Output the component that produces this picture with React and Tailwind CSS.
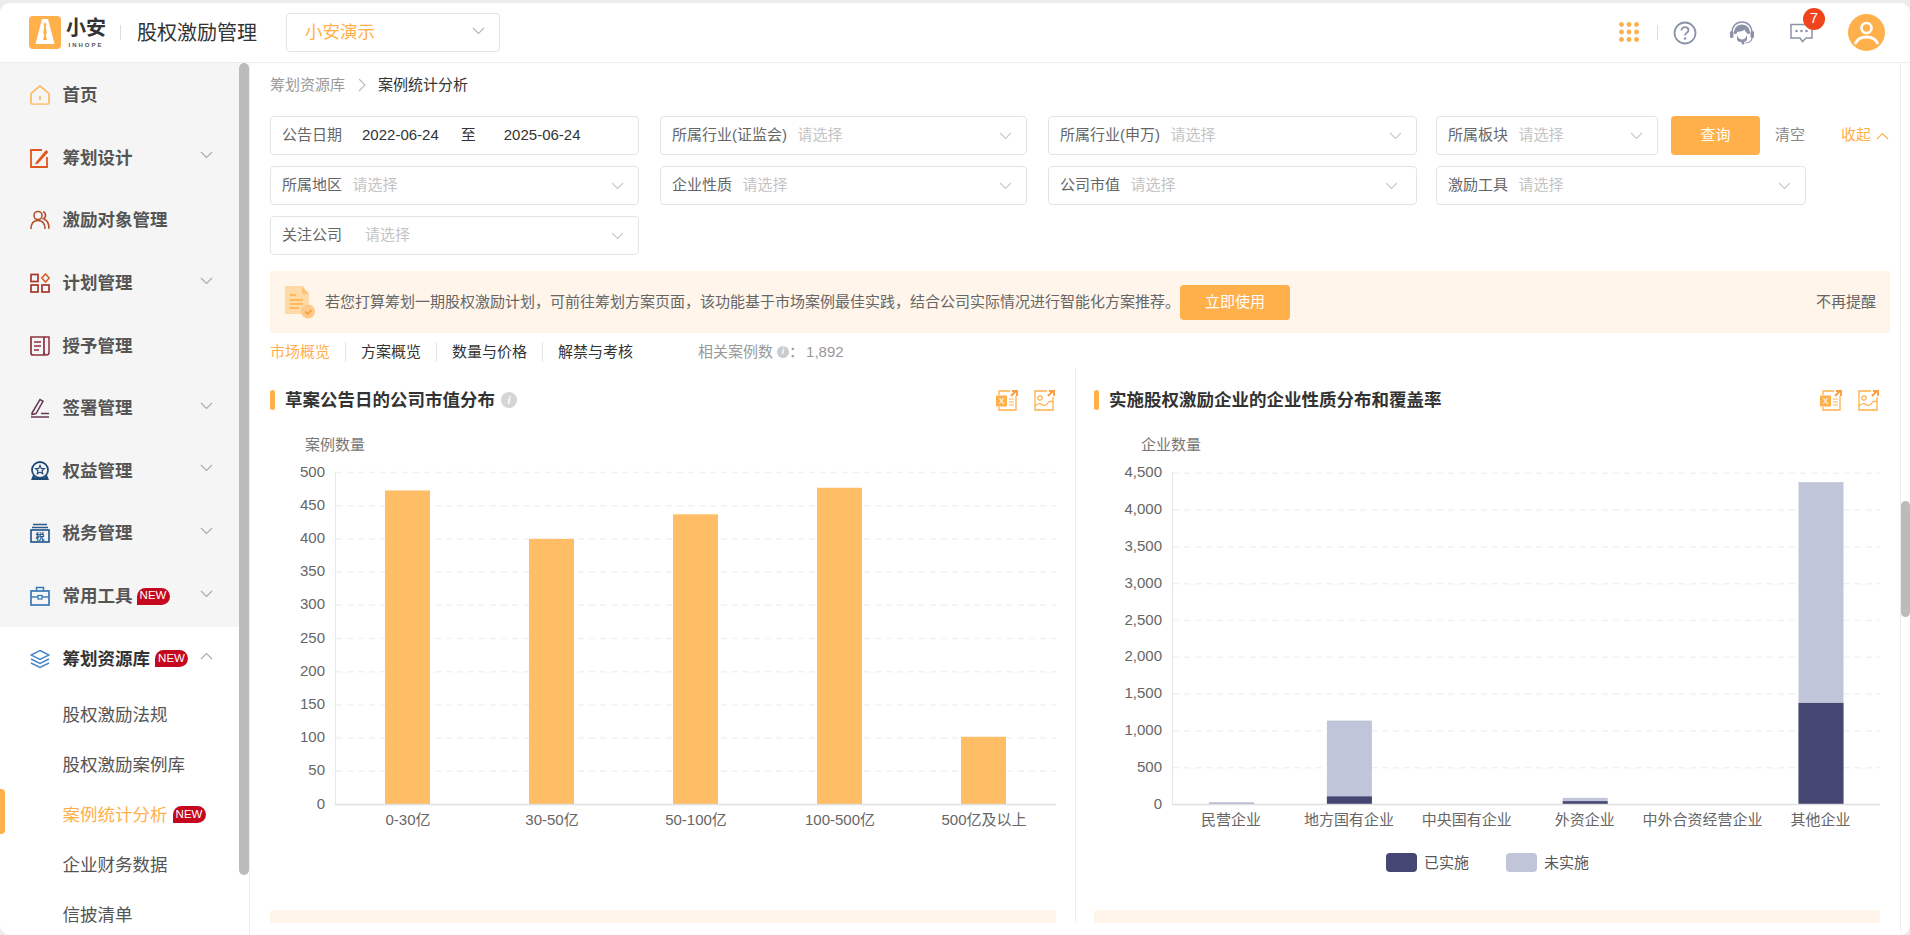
import React from 'react'

function Chevron({ up, color = '#b5b5b5', className = '' }) {
  return (
    <svg width="13" height="8" viewBox="0 0 13 8" fill="none" className={className}>
      <path d={up ? 'M1 7L6.5 1.5L12 7' : 'M1 1L6.5 6.5L12 1'} stroke={color} strokeWidth="1.1" />
    </svg>
  )
}

function Ico({ children }) {
  return <svg width="20" height="20" viewBox="0 0 20 20" fill="none" className="shrink-0">{children}</svg>
}

const icons = {
  home: <Ico><path d="M1 8.5L10 1l9 7.5V18a1 1 0 0 1-1 1H2a1 1 0 0 1-1-1z" stroke="#ffb04a" strokeWidth="1.5" /><path d="M10 11v4" stroke="#ffb04a" strokeWidth="1.5" /><path d="M1 18h18v1.5H1z" fill="#ffd29a" /></Ico>,
  edit: <Ico><path d="M17 9v10H1V2h11" stroke="#e0581e" strokeWidth="1.8" /><path d="M6 14L16 2l2.5 2L8 15.5l-3 1z" fill="#e0581e" /></Ico>,
  people: <Ico><circle cx="8" cy="5.5" r="4" stroke="#b5502e" strokeWidth="1.6" /><path d="M1 19c0-6 2.5-8.5 7-8.5s7 2.5 7 8.5" stroke="#b5502e" strokeWidth="1.6" /><path d="M13 1.8c3 .7 3.5 5.5.5 7 3 1 5.5 3.7 5.5 10" stroke="#b5502e" strokeWidth="1.6" /></Ico>,
  plan: <Ico><rect x="1" y="1.5" width="7" height="7" stroke="#a8352a" strokeWidth="1.7" /><rect x="1" y="12" width="7" height="7" stroke="#a8352a" strokeWidth="1.7" /><rect x="12" y="12" width="7" height="7" stroke="#a8352a" strokeWidth="1.7" /><path d="M15.5 1l3.7 4-3.7 4-3.7-4z" stroke="#d9602a" strokeWidth="1.6" /></Ico>,
  book: <Ico><path d="M1 1h13v18H3a2 2 0 0 1-2-2z" stroke="#8f3040" strokeWidth="1.7" /><path d="M14 1h5v15.5a2.5 2.5 0 0 1-5 0" stroke="#8f3040" strokeWidth="1.5" /><path d="M4 6h7M4 10h7M4 14h5" stroke="#8f3040" strokeWidth="1.3" /></Ico>,
  sign: <Ico><path d="M2 15L10 1.5l3 1.8L6 15.5l-4 1z" stroke="#6a3a55" strokeWidth="1.5" /><path d="M1 19h18M11 15.5h8" stroke="#6a3a55" strokeWidth="1.4" /></Ico>,
  badge: <Ico><circle cx="10" cy="9" r="8" stroke="#1f4a78" strokeWidth="1.8" /><path d="M10 4.5l1.3 2.9 3 .3-2.2 2 .6 3L10 11.2l-2.7 1.5.6-3-2.2-2 3-.3z" stroke="#1f4a78" strokeWidth="1.2" /><path d="M3 14l-2 5h18l-2-5-2.5 2.5h-9z" fill="#1f4a78" /></Ico>,
  tax: <Ico><path d="M3 1.5h14M2 4.5h16" stroke="#2a5a8a" strokeWidth="1.4" /><rect x="1" y="7" width="18" height="12" stroke="#2a5a8a" strokeWidth="1.7" /><text x="10" y="16.5" textAnchor="middle" fontSize="9" fontWeight="700" fill="#2a5a8a">税</text></Ico>,
  tool: <Ico><path d="M6.5 5V1.5h7V5" stroke="#3a78b8" strokeWidth="1.5" /><rect x="1" y="5" width="18" height="14" stroke="#3a78b8" strokeWidth="1.7" /><path d="M1 11h18" stroke="#3a78b8" strokeWidth="1.4" /><rect x="8" y="9.5" width="4" height="3.5" fill="#fff" stroke="#3a78b8" strokeWidth="1.3" /></Ico>,
  layers: <Ico><path d="M10 1.5l9 4.5-9 4.5L1 6z" stroke="#4a86c8" strokeWidth="1.4" /><path d="M1 10l9 4.5 9-4.5M1 14l9 4.5 9-4.5" stroke="#4a86c8" strokeWidth="1.4" /></Ico>,
}

function NewBadge({ className = '' }) {
  return (
    <span className={`inline-flex h-[17px] w-[33px] items-center justify-center rounded-tl-full rounded-r-full bg-[#c4091f] text-[11.5px] font-normal leading-none text-white ${className}`}>NEW</span>
  )
}

function MenuItem({ icon, label, arrow = true, badge, dark, up }) {
  return (
    <div className={`flex h-[62.6px] items-center pl-[30px] pr-[26px] ${dark ? 'bg-white' : ''}`}>
      {icons[icon]}
      <span className={`ml-[12.5px] text-[17.5px] font-bold ${dark ? 'text-[#333]' : 'text-[#555]'}`}>{label}</span>
      {badge && <NewBadge className={dark ? 'ml-[5px]' : 'ml-[4px]'} />}
      {arrow && <Chevron up={up} className="ml-auto -mt-[5px]" color="#aaa" />}
    </div>
  )
}

function Sidebar() {
  return (
    <div className="flex w-[250px] shrink-0 border-r border-[#eee]">
      <div className="w-[239px] shrink-0">
        <div className="bg-[#f5f5f5] pt-px">
          <MenuItem icon="home" label="首页" arrow={false} />
          <MenuItem icon="edit" label="筹划设计" />
          <MenuItem icon="people" label="激励对象管理" arrow={false} />
          <MenuItem icon="plan" label="计划管理" />
          <MenuItem icon="book" label="授予管理" arrow={false} />
          <MenuItem icon="sign" label="签署管理" />
          <MenuItem icon="badge" label="权益管理" />
          <MenuItem icon="tax" label="税务管理" />
          <MenuItem icon="tool" label="常用工具" badge />
        </div>
        <MenuItem icon="layers" label="筹划资源库" badge dark up />
        <div className="flex h-[50px] items-center pl-[62.5px] text-[17.5px] text-[#555]">股权激励法规</div>
        <div className="flex h-[50px] items-center pl-[62.5px] text-[17.5px] text-[#555]">股权激励案例库</div>
        <div className="relative flex h-[50px] items-center pl-[62.5px] text-[17.5px] text-[#ffb04a]">
          <span className="absolute left-0 top-[-1px] h-[45px] w-[5px] rounded-r-[4px] bg-[#ffb04a]" />
          案例统计分析
          <NewBadge className="ml-[5px]" />
        </div>
        <div className="flex h-[50px] items-center pl-[62.5px] text-[17.5px] text-[#555]">企业财务数据</div>
        <div className="flex h-[50px] items-center pl-[62.5px] text-[17.5px] text-[#555]">信披清单</div>
      </div>
      <div className="w-[10px] shrink-0">
        <div className="h-[812px] w-[10px] rounded-[5px] bg-[#bbb]" />
      </div>
    </div>
  )
}

function Logo() {
  return (
    <svg width="32" height="33" viewBox="0 0 32 33" className="shrink-0">
      <rect width="32" height="33" rx="4" fill="#ffb04a" />
      <path d="M13 3h6l6.5 25h-19z" fill="#fff" />
      <path d="M16 6.5c1.5 1 1.5 3 .8 4.5l1 6-1 2 1.2 5h-4l1.2-5-1-2 1-6c-.7-1.5-.7-3.5.8-4.5z" fill="#ffb04a" />
    </svg>
  )
}

function Header() {
  return (
    <div className="flex h-[60px] shrink-0 items-center border-b border-[#eee] bg-white pl-[29px] pr-[25px]">
      <Logo />
      <div className="ml-[5px] flex w-[40px] flex-col items-center">
        <span className="text-[20px] font-bold leading-[24px] text-[#333]">小安</span>
        <span className="mt-[1px] text-[6px] font-bold leading-[8px] tracking-[2px] text-[#555]">INHOPE</span>
      </div>
      <span className="ml-[14px] h-[15px] w-px bg-[#ddd]" />
      <span className="ml-[16px] text-[20px] text-[#333]">股权激励管理</span>
      <div className="ml-[29px] flex h-[39px] w-[214px] items-center justify-between rounded-[4px] border border-[#e4e4e4] pl-[18px] pr-[14px]">
        <span className="text-[17.5px] text-[#ffb04a]">小安演示</span>
        <Chevron className="-mt-[3px]" />
      </div>
      <div className="ml-auto flex items-center">
        <svg width="20" height="21" viewBox="0 0 20 21" fill="#ffb04a">
          {[2.5, 10, 17.5].map(y => [2.5, 10, 17.5].map(x => <circle key={`${x}-${y}`} cx={x} cy={y} r="2.4" />))}
        </svg>
        <span className="ml-[18px] h-[15px] w-px bg-[#ddd]" />
        <svg width="24" height="24" viewBox="0 0 24 24" fill="none" className="ml-[15px]">
          <circle cx="12" cy="12" r="10.5" stroke="#8b93a7" strokeWidth="1.8" />
          <path d="M8.5 9.5c0-2 1.5-3.3 3.5-3.3s3.5 1.3 3.5 3.1c0 2.6-3.5 2.5-3.5 5.2" stroke="#8b93a7" strokeWidth="1.8" />
          <circle cx="12" cy="17.5" r="1.2" fill="#8b93a7" />
        </svg>
        <svg width="26" height="26" viewBox="0 0 26 26" fill="none" className="ml-[32px]">
          <path d="M3 13C3 6.5 7 2 13 2s10 4.5 10 11" stroke="#8b93a7" strokeWidth="1.4" />
          <path d="M5 13c0-5 3.5-8.5 8-8.5s8 3.5 8 8.5c0 .5-1 1.5-2 1-2-1-3-3.5-3.5-4.5-2 2-6 2.5-7 2-.3 1-1 2.5-1.5 2.5-1 .5-2-.5-2-1z" fill="#8b93a7" />
          <rect x="1" y="11" width="3.5" height="7" rx="1.5" fill="#8b93a7" />
          <rect x="21.5" y="11" width="3.5" height="7" rx="1.5" fill="#8b93a7" />
          <path d="M8 15c1 3 3 4.5 5 4.5s4-1.5 5-4.5v5c-2 3-8 3-10 0z" fill="#8b93a7" />
          <path d="M23 18c0 3-3 5-6.5 5" stroke="#8b93a7" strokeWidth="1.2" />
          <circle cx="14" cy="23" r="1.5" fill="#8b93a7" />
        </svg>
        <div className="relative ml-[35px] h-[20px] w-[23px]">
          <svg width="23" height="20" viewBox="0 0 23 20" fill="none">
            <path d="M1 1.5h21V15h-6l-3.5 3.5L10 15H1z" stroke="#8b93a7" strokeWidth="1.5" />
            <circle cx="6.5" cy="8" r="1.3" fill="#8b93a7" />
            <circle cx="11.5" cy="8" r="1.3" fill="#8b93a7" />
            <circle cx="16.5" cy="8" r="1.3" fill="#8b93a7" />
          </svg>
          <span className="absolute -top-[15px] left-[13px] flex h-[22px] w-[22px] items-center justify-center rounded-full bg-[#f0441c] text-[15px] text-white">7</span>
        </div>
        <svg width="37" height="37" viewBox="0 0 37 37" className="ml-[35px]">
          <circle cx="18.5" cy="18.5" r="18.5" fill="#ffb04a" />
          <circle cx="18.5" cy="14" r="5" fill="none" stroke="#fff" strokeWidth="2.6" />
          <path d="M7.5 29c2-4 6.5-6 11-6s9 2 11 6" fill="none" stroke="#fff" strokeWidth="2.8" strokeLinecap="round" />
        </svg>
      </div>
    </div>
  )
}

function Field({ label, className, gap = 'ml-[10.5px]', pr = 'pr-[14px]' }) {
  return (
    <div className={`flex h-[39px] shrink-0 items-center rounded-[4px] border border-[#e4e4e4] pl-[11px] text-[15px] ${pr} ${className}`}>
      <span className="text-[#666]">{label}</span>
      <span className={`text-[#c4c4c4] ${gap}`}>请选择</span>
      <Chevron className="ml-auto" color="#c8c8c8" />
    </div>
  )
}

function Filters() {
  return (
    <div className="flex flex-col gap-[11px]">
      <div className="flex items-center">
        <div className="flex h-[39px] w-[369px] shrink-0 items-center rounded-[4px] border border-[#e4e4e4] pl-[11px] text-[15px]">
          <span className="text-[#666]">公告日期</span>
          <span className="ml-[20px] text-[#333]">2022-06-24</span>
          <span className="ml-[22px] text-[#333]">至</span>
          <span className="ml-[28px] text-[#333]">2025-06-24</span>
        </div>
        <Field label="所属行业(证监会)" className="ml-[21px] w-[367px]" />
        <Field label="所属行业(申万)" className="ml-[21px] w-[369px]" />
        <Field label="所属板块" className="ml-[19px] w-[222px]" />
        <button className="ml-[13px] h-[39px] w-[89px] rounded-[4px] bg-[#ffb04a] text-[15px] text-white">查询</button>
        <span className="ml-[15px] text-[15px] text-[#888]">清空</span>
        <span className="ml-[36px] text-[15px] text-[#ffb04a]">收起</span>
        <Chevron up className="ml-[5px]" color="#ffb04a" />
      </div>
      <div className="flex items-center">
        <Field label="所属地区" className="w-[369px]" />
        <Field label="企业性质" className="ml-[21px] w-[367px]" />
        <Field label="公司市值" className="ml-[21px] w-[369px]" pr="pr-[18px]" />
        <Field label="激励工具" className="ml-[19px] w-[370px]" />
      </div>
      <Field label="关注公司" className="w-[369px]" gap="ml-[23px]" />
    </div>
  )
}

function Banner() {
  return (
    <div className="mt-[16px] flex h-[62px] items-center bg-[#fff5ea] pl-[14px] pr-[14px] text-[15px]">
      <svg width="31" height="34" viewBox="0 0 31 34" className="shrink-0">
        <path d="M1 1h17l7 8v20H1z" fill="#ffd9a6" />
        <path d="M18 1l7 8h-7z" fill="#ffc27a" />
        <path d="M6 10h6M6 15h13M6 19h13M6 23h9" stroke="#ffb04a" strokeWidth="1.5" />
        <circle cx="24" cy="26.5" r="7" fill="#ffc98a" />
        <path d="M21 26.5l2.5 2.5 4-4" stroke="#f59a30" strokeWidth="1.5" fill="none" />
      </svg>
      <span className="ml-[10px] text-[#666]">若您打算筹划一期股权激励计划，可前往筹划方案页面，该功能基于市场案例最佳实践，结合公司实际情况进行智能化方案推荐。</span>
      <button className="h-[35px] w-[110px] shrink-0 rounded-[4px] bg-[#ffb04a] text-[15px] text-white">立即使用</button>
      <span className="ml-auto text-[#666]">不再提醒</span>
    </div>
  )
}

function Tabs() {
  return (
    <div className="flex h-[35px] items-center pt-[3px] text-[15px]">
      <span className="text-[#ffb04a]">市场概览</span>
      <span className="ml-[15px] h-[20px] w-px bg-[#e5e5e5]" />
      <span className="ml-[15px] text-[#333]">方案概览</span>
      <span className="ml-[15px] h-[20px] w-px bg-[#e5e5e5]" />
      <span className="ml-[15px] text-[#333]">数量与价格</span>
      <span className="ml-[15px] h-[20px] w-px bg-[#e5e5e5]" />
      <span className="ml-[15px] text-[#333]">解禁与考核</span>
      <span className="ml-[65px] text-[#999]">相关案例数</span>
      <span className="ml-[4px] flex h-[12px] w-[12px] items-center justify-center rounded-full bg-[#ccc] text-[9px] font-bold italic text-white">i</span>
      <span className="text-[#999]">：</span>
      <span className="ml-[2px] text-[#999]">1,892</span>
    </div>
  )
}

function ExportIcons() {
  return (
    <div className="ml-auto mr-[1px] flex items-center gap-[15px]">
      <svg width="22" height="21" viewBox="0 0 22 21" fill="none">
        <path d="M3 5V1h11M20 6v14H3v-3" stroke="#ffb04a" strokeWidth="1.3" />
        <path d="M15 6l5-5M16 1h5v5" stroke="#ff9a3c" strokeWidth="1.8" />
        <rect x="0" y="5.5" width="11" height="11" fill="#ffb04a" />
        <text x="5.5" y="14" textAnchor="middle" fontSize="9" fill="#fff">X</text>
        <path d="M13 9h5M13 12h5M13 15h5" stroke="#ffb04a" strokeWidth="1.2" />
      </svg>
      <svg width="22" height="21" viewBox="0 0 22 21" fill="none">
        <path d="M14 1H2v19h18V7" stroke="#ffb04a" strokeWidth="1.3" />
        <path d="M15 6l5-5M16 1h5v5" stroke="#ff9a3c" strokeWidth="1.8" />
        <circle cx="7" cy="8" r="2.2" stroke="#ffb04a" strokeWidth="1.2" />
        <path d="M2 16c3-3 5-3 7-1.5s4 1 6-1.5 3-2 5-1" stroke="#ffb04a" strokeWidth="1.2" />
      </svg>
    </div>
  )
}

function ChartTitle({ title, info }) {
  return (
    <div className="flex h-[20px] items-center">
      <span className="h-[20px] w-[5px] rounded-[3px] bg-[#ffb04a]" />
      <span className="ml-[10px] text-[17.5px] font-bold text-[#333]">{title}</span>
      {info && <span className="ml-[6px] flex h-[16px] w-[16px] items-center justify-center rounded-full bg-[#d5d5d5] text-[11px] font-bold italic text-white">i</span>}
      <ExportIcons />
    </div>
  )
}

const marketCaps = [
  { label: '0-30亿', v: 473 },
  { label: '30-50亿', v: 400 },
  { label: '50-100亿', v: 437 },
  { label: '100-500亿', v: 477 },
  { label: '500亿及以上', v: 102 },
]

function CapChart() {
  const y = v => 804.5 - v * 0.664
  return (
    <svg width="786" height="478" viewBox="270 432 786 478" className="block">
      <text x="305" y="450" className="fill-[#777] text-[15px]">案例数量</text>
      {[0, 50, 100, 150, 200, 250, 300, 350, 400, 450, 500].map(t => (
        <g key={t}>
          {t > 0 && <line x1="336" x2="1056" y1={y(t)} y2={y(t)} stroke="#f2f2f2" strokeWidth="1.5" strokeDasharray="6 5" />}
          <text x="325" y={y(t) + 4} textAnchor="end" className="fill-[#666] text-[15px]">{t}</text>
        </g>
      ))}
      <line x1="335.5" x2="335.5" y1="472" y2="804" stroke="#e6e6e6" />
      {marketCaps.map((d, i) => {
        const cx = 408 + i * 144
        return (
          <g key={d.label}>
            <rect x={cx - 23} y={y(d.v)} width="45" height={804.5 - y(d.v)} fill="#ffbd66" />
            <text x={cx} y="825" textAnchor="middle" className="fill-[#666] text-[15px]">{d.label}</text>
          </g>
        )
      })}
      <line x1="335" x2="1056" y1="804.5" y2="804.5" stroke="#e0e0e0" strokeWidth="1.5" />
    </svg>
  )
}

const companies = [
  { label: '民营企业', done: 8, total: 32 },
  { label: '地方国有企业', done: 110, total: 1140 },
  { label: '中央国有企业', done: 0, total: 0 },
  { label: '外资企业', done: 45, total: 90 },
  { label: '中外合资经营企业', done: 0, total: 0 },
  { label: '其他企业', done: 1380, total: 4380 },
]

function TypeChart() {
  const y = v => 804.5 - v * 0.0736
  return (
    <svg width="787" height="478" viewBox="1093 432 787 478" className="block">
      <text x="1140" y="450" className="fill-[#777] text-[15px]">企业数量</text>
      {[0, 500, 1000, 1500, 2000, 2500, 3000, 3500, 4000, 4500].map(t => (
        <g key={t}>
          {t > 0 && <line x1="1172" x2="1879" y1={y(t)} y2={y(t)} stroke="#f2f2f2" strokeWidth="1.5" strokeDasharray="6 5" />}
          <text x="1161" y={y(t) + 4} textAnchor="end" className="fill-[#666] text-[15px]">{t.toLocaleString('en-US')}</text>
        </g>
      ))}
      <line x1="1171.5" x2="1171.5" y1="472" y2="804" stroke="#e6e6e6" />
      {companies.map((d, i) => {
        const cx = 1231 + i * 117.9
        return (
          <g key={d.label}>
            {d.total > 0 && <rect x={cx - 23} y={y(d.total)} width="45" height={804.5 - y(d.total)} fill="#c1c5da" />}
            {d.done > 0 && <rect x={cx - 23} y={y(d.done)} width="45" height={804.5 - y(d.done)} fill="#454671" />}
            <text x={cx - 1} y="825" textAnchor="middle" className="fill-[#666] text-[15px]">{d.label}</text>
          </g>
        )
      })}
      <line x1="1171" x2="1879" y1="804.5" y2="804.5" stroke="#e0e0e0" strokeWidth="1.5" />
      <rect x="1385" y="853" width="31" height="19" rx="4" fill="#454671" />
      <text x="1423" y="868" className="fill-[#555] text-[15px]">已实施</text>
      <rect x="1505" y="853" width="31" height="19" rx="4" fill="#c1c5da" />
      <text x="1543" y="868" className="fill-[#555] text-[15px]">未实施</text>
    </svg>
  )
}

function Charts() {
  return (
    <div className="flex">
      <div className="w-[786px] shrink-0 pt-[22px]">
        <ChartTitle title="草案公告日的公司市值分布" info />
        <div className="mt-[22px]"><CapChart /></div>
        <div className="h-[13px] rounded-t-[4px] bg-[#fff5ea]" />
      </div>
      <div className="ml-[19px] w-[805px] shrink-0 border-l border-[#eee] pl-[18px] pt-[22px]">
        <ChartTitle title="实施股权激励企业的企业性质分布和覆盖率" />
        <div className="mt-[22px]"><TypeChart /></div>
        <div className="h-[13px] rounded-t-[4px] bg-[#fff5ea]" />
      </div>
    </div>
  )
}

export default function App() {
  return (
    <div className="h-[935px] w-[1910px] overflow-hidden bg-[#ececec] pt-[3px] text-[#333] [font-family:'Liberation_Sans','Noto_Sans_CJK_SC',sans-serif]">
      <div className="flex h-[932px] flex-col overflow-hidden rounded-[10px] bg-white">
        <Header />
        <div className="flex min-h-0 flex-1">
          <Sidebar />
          <div className="min-w-0 flex-1 pl-[20px]">
            <div className="flex">
              <div className="w-[1620px] shrink-0">
                <div className="mb-[9px] flex h-[44px] items-center text-[15px]">
                  <span className="text-[#999]">筹划资源库</span>
                  <svg width="8" height="14" viewBox="0 0 8 14" fill="none" className="ml-[13px]"><path d="M1 1l6 6-6 6" stroke="#bbb" strokeWidth="1.1" /></svg>
                  <span className="ml-[12px] text-[#333]">案例统计分析</span>
                </div>
                <Filters />
                <Banner />
                <Tabs />
                <Charts />
              </div>
              <div className="ml-auto h-[869px] w-[10px] shrink-0 border-l border-[#eee] pt-[438px]">
                <div className="h-[116px] w-[9px] rounded-[5px] bg-[#bbb]" />
              </div>
            </div>
          </div>
        </div>
      </div>
    </div>
  )
}
